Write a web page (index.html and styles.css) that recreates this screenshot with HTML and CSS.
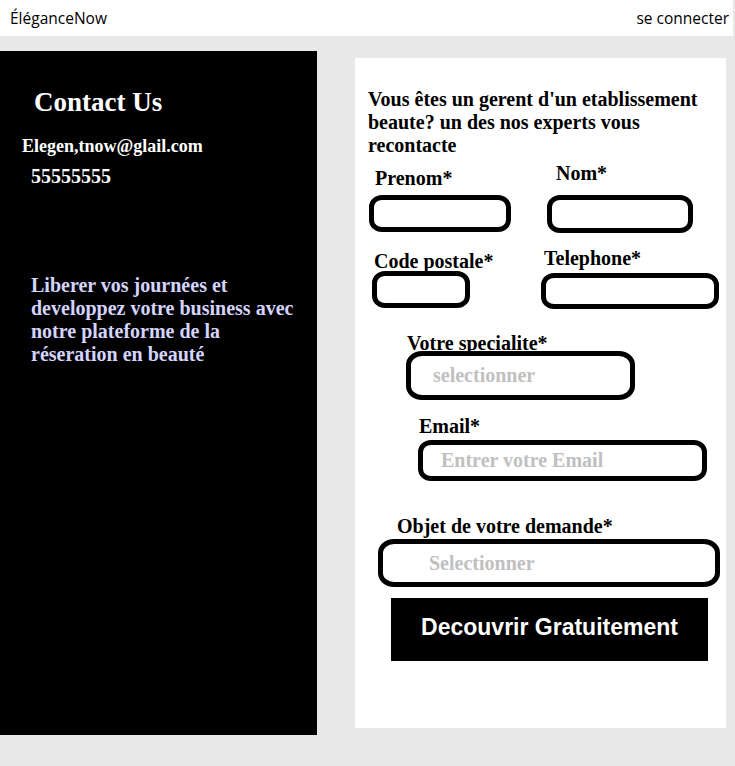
FILE: index.html
```html
<!DOCTYPE html>
<html lang="fr">
<head>
<meta charset="utf-8">
<title>ÉléganceNow</title>
<link rel="stylesheet" href="styles.css">
</head>
<body>
<header class="topbar">
  <span class="brand">ÉléganceNow</span>
  <a class="login">se connecter</a>
</header>
<main class="main">
  <aside class="contact">
    <h1 class="contact-title">Contact Us</h1>
    <div class="contact-mail">Elegen,tnow@glail.com</div>
    <div class="contact-phone">55555555</div>
    <p class="contact-pitch">Liberer vos journées et developpez votre business avec notre plateforme de la réseration en beauté</p>
  </aside>
  <section class="card">
    <h2 class="card-title">Vous êtes un gerent d'un etablissement beaute? un des nos experts vous recontacte</h2>
    <div class="row row-1">
      <div class="field f-prenom">
        <div class="label">Prenom*</div>
        <div class="input"></div>
      </div>
      <div class="field f-nom">
        <div class="label">Nom*</div>
        <div class="input"></div>
      </div>
    </div>
    <div class="row row-2">
      <div class="field f-code">
        <div class="label">Code postale*</div>
        <div class="input"></div>
      </div>
      <div class="field f-tel">
        <div class="label">Telephone*</div>
        <div class="input"></div>
      </div>
    </div>
    <div class="field f-spec">
      <div class="label">Votre specialite*</div>
      <div class="input"><span class="ph">selectionner</span></div>
    </div>
    <div class="field f-email">
      <div class="label">Email*</div>
      <div class="input"><span class="ph">Entrer votre Email</span></div>
    </div>
    <div class="field f-objet">
      <div class="label">Objet de votre demande*</div>
      <div class="input"><span class="ph">Selectionner</span></div>
    </div>
    <button class="cta">Decouvrir Gratuitement</button>
  </section>
</main>
</body>
</html>
```
FILE: styles.css
```css
html, body {
  margin: 0;
  padding: 0;
}
body {
  background: #e8e8e8;
  width: 735px;
  height: 766px;
  overflow: hidden;
  font-family: "Liberation Serif", "Times New Roman", serif;
}
.topbar {
  width: 733px;
  height: 36px;
  background: #ffffff;
  display: flex;
  justify-content: space-between;
  align-items: center;
  box-sizing: border-box;
  padding: 0 4px 0 10px;
  font-family: "Open Sans", "Noto Sans", sans-serif;
  font-size: 15.5px;
  color: #000;
}
.brand { letter-spacing: 0; }
.login { color: #000; text-decoration: none; letter-spacing: 0; }

.main {
  display: flex;
  align-items: flex-start;
  padding-top: 15px;
}
.contact {
  width: 317px;
  height: 684px;
  background: #000;
  box-sizing: border-box;
  padding-top: 36px;
  color: #fff;
  font-weight: bold;
}
.contact-title {
  margin: 0 0 0 34px;
  font-size: 27px;
  line-height: 31px;
  font-weight: bold;
}
.contact-mail {
  margin: 18px 0 0 22px;
  font-size: 18px;
  line-height: 21px;
}
.contact-phone {
  margin: 8px 0 0 31px;
  font-size: 20px;
  line-height: 23px;
}
.contact-pitch {
  margin: 86px 0 0 31px;
  width: 270px;
  font-size: 20px;
  line-height: 23px;
  color: #d4d4ff;
}

.card {
  margin: 7px 0 0 38px;
  width: 371px;
  height: 670px;
  background: #fff;
  box-sizing: border-box;
  padding-top: 30px;
  font-weight: bold;
  color: #000;
}
.card-title {
  margin: 0 0 0 13px;
  width: 345px;
  font-size: 20px;
  line-height: 23px;
  font-weight: bold;
}
.row {
  display: flex;
  align-items: flex-start;
}
.label {
  font-size: 20px;
  line-height: 23px;
  position: relative;
  z-index: 1;
  white-space: nowrap;
}
.input {
  box-sizing: border-box;
  border: 5px solid #000;
  border-radius: 13px / 12px;
  background: #fff;
  display: flex;
  align-items: center;
}
.ph {
  font-size: 20px;
  color: #c0c0c0;
}

.f-prenom { margin: 10px 0 0 14px; width: 142px; }
.f-prenom .label { margin: 0 0 5px 6px; }
.f-prenom .input { width: 142px; height: 37px; }

.f-nom { margin: 5px 0 0 36px; width: 146px; }
.f-nom .label { margin: 0 0 10px 9px; }
.f-nom .input { width: 146px; height: 38px; }

.f-code { margin: 17px 0 0 17px; width: 98px; }
.f-code .label { margin: 0 0 -2px 2px; }
.f-code .input { width: 98px; height: 37px; }

.f-tel { margin: 14px 0 0 71px; width: 178px; }
.f-tel .label { margin: 0 0 3px 3px; }
.f-tel .input { width: 178px; height: 36px; }

.f-spec { margin: 23px 0 0 51px; }
.f-spec .label { margin: 0 0 -4px 1px; }
.f-spec .input { width: 229px; height: 49px; padding-left: 22px; border-radius: 16px / 14px; }

.f-email { margin: 15px 0 0 63px; }
.f-email .label { margin: 0 0 2px 1px; }
.f-email .input { width: 289px; height: 41px; padding-left: 18px; }

.f-objet { margin: 34px 0 0 23px; }
.f-objet .label { margin: 0 0 1px 19px; }
.f-objet .input { width: 342px; height: 48px; padding-left: 46px; border-radius: 16px / 14px; }

.cta {
  display: flex;
  justify-content: center;
  align-items: center;
  margin: 11px 0 0 36px;
  width: 317px;
  height: 63px;
  padding: 0 0 4px 0;
  border: none;
  background: #000;
  color: #fff;
  font-family: "Liberation Sans", Arial, sans-serif;
  font-weight: bold;
  font-size: 23px;
}
```
